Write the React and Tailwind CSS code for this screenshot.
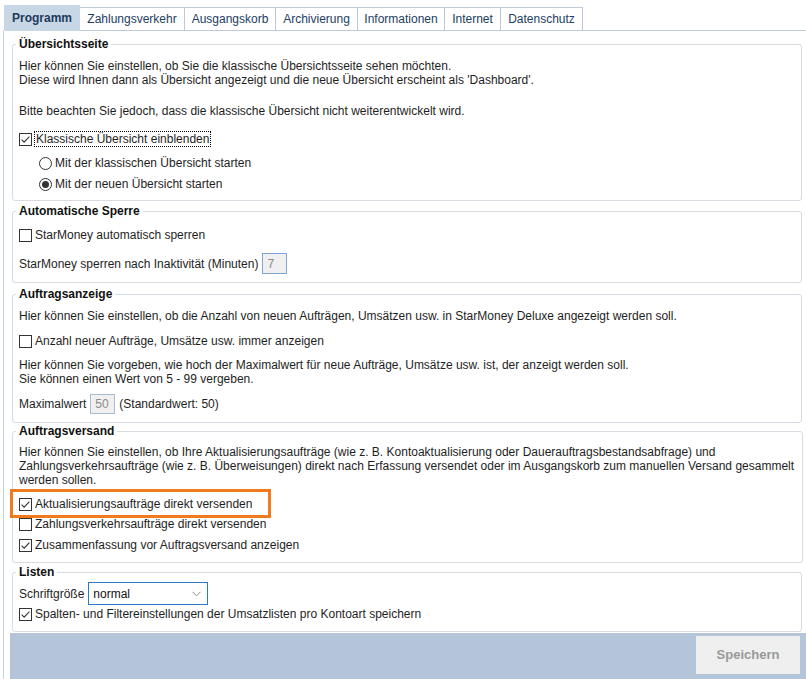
import React from "react";

const tabs = [
  { label: "Programm", w: "w-[76px]", active: true },
  { label: "Zahlungsverkehr", w: "w-[105px]" },
  { label: "Ausgangskorb", w: "w-[91px]" },
  { label: "Archivierung", w: "w-[82px]" },
  { label: "Informationen", w: "w-[87px]" },
  { label: "Internet", w: "w-[56px]" },
  { label: "Datenschutz", w: "w-[82px]" },
];

function CheckBox({ checked }) {
  return (
    <svg width="13" height="13" viewBox="0 0 13 13" className="shrink-0">
      <rect x="0.5" y="0.5" width="12" height="12" fill="#fff" stroke="#333" />
      {checked && (
        <path d="M2.6 6.6 L5.1 9.1 L10.4 3.6" fill="none" stroke="#333" strokeWidth="1.1" />
      )}
    </svg>
  );
}

function Radio({ checked }) {
  return (
    <svg width="13" height="13" viewBox="0 0 13 13" className="shrink-0">
      <circle cx="6.5" cy="6.5" r="6" fill="#fff" stroke="#333" />
      {checked && <circle cx="6.5" cy="6.5" r="3.5" fill="#333" />}
    </svg>
  );
}

function CheckRow({ checked, children, focus, className = "" }) {
  return (
    <div className={`flex items-center h-[16px] ${className}`}>
      <CheckBox checked={checked} />
      {focus ? (
        <span className="ml-[2px] px-[1px] border border-dotted border-black leading-[14px] whitespace-nowrap">
          {children}
        </span>
      ) : (
        <span className="ml-[3px] whitespace-nowrap">{children}</span>
      )}
    </div>
  );
}

function RadioRow({ checked, children, className = "" }) {
  return (
    <div className={`flex items-center h-[16px] pl-[20px] ${className}`}>
      <Radio checked={checked} />
      <span className="ml-[3px] whitespace-nowrap">{children}</span>
    </div>
  );
}

function Group({ title, className = "", children }) {
  return (
    <fieldset className={`border border-[#d6dce2] rounded-[3px] pl-[6px] pr-2 ${className}`}>
      <legend className="-ml-[3px] px-[3px] font-bold leading-[14px] text-[#111]">{title}</legend>
      {children}
    </fieldset>
  );
}

export default function App() {
  return (
    <div className="w-[806px] h-[679px] overflow-hidden bg-white font-['Liberation_Sans',Arial,sans-serif] text-[12px] leading-[14px] text-[#1e1e1e]">
      {/* tab strip */}
      <div className="flex items-end h-[31px] pl-[4px]">
        {tabs.map((t) =>
          t.active ? (
            <div
              key={t.label}
              className={`${t.w} h-[26px] bg-[#c8d7e6] flex items-center justify-center font-bold text-[#1b3a5c]`}
            >
              {t.label}
            </div>
          ) : (
            <div
              key={t.label}
              className={`${t.w} h-[24px] border-t border-r border-b border-[#bccad8] flex items-center justify-center text-[#22405f] pb-[1px]`}
            >
              {t.label}
            </div>
          )
        )}
        <div className="flex-1 border-b border-[#bccad8]" />
      </div>

      {/* panel */}
      <div className="ml-[3px] border-l border-[#c2cfdc] h-[648px] flex flex-col">
        <div className="pl-[8px] pr-[4px]">
          <Group title="Übersichtsseite" className="mt-[6px] pt-[8px] pb-[8px]">
            <p className="whitespace-nowrap">
              Hier können Sie einstellen, ob Sie die klassische Übersichtsseite sehen möchten.
              <br />
              Diese wird Ihnen dann als Übersicht angezeigt und die neue Übersicht erscheint als 'Dashboard'.
            </p>
            <p className="mt-[17px] whitespace-nowrap">
              Bitte beachten Sie jedoch, dass die klassische Übersicht nicht weiterentwickelt wird.
            </p>
            <CheckRow checked focus className="mt-[13px]">
              Klassische Übersicht einblenden
            </CheckRow>
            <RadioRow className="mt-[8px]">Mit der klassischen Übersicht starten</RadioRow>
            <RadioRow checked className="mt-[5px]">
              Mit der neuen Übersicht starten
            </RadioRow>
          </Group>

          <Group title="Automatische Sperre" className="mt-[3px] pt-[9px] pb-[8px]">
            <CheckRow>StarMoney automatisch sperren</CheckRow>
            <div className="mt-[10px] flex items-center h-[21px]">
              <span className="whitespace-nowrap">StarMoney sperren nach Inaktivität (Minuten)</span>
              <div className="ml-[4px] w-[25px] h-[21px] border border-[#7ba6d3] bg-[#f0f0f0] text-[#8a8a8a] flex items-center pl-[4px]">
                7
              </div>
            </div>
          </Group>

          <Group title="Auftragsanzeige" className="mt-[4px] pt-[8px] pb-[8px]">
            <p className="whitespace-nowrap">
              Hier können Sie einstellen, ob die Anzahl von neuen Aufträgen, Umsätzen usw. in StarMoney Deluxe angezeigt werden soll.
            </p>
            <CheckRow className="mt-[10px]">Anzahl neuer Aufträge, Umsätze usw. immer anzeigen</CheckRow>
            <p className="mt-[9px] whitespace-nowrap">
              Hier können Sie vorgeben, wie hoch der Maximalwert für neue Aufträge, Umsätze usw. ist, der anzeigt werden soll.
              <br />
              Sie können einen Wert von 5 - 99 vergeben.
            </p>
            <div className="mt-[8px] flex items-center h-[20px]">
              <span>Maximalwert</span>
              <div className="ml-[4px] w-[25px] h-[20px] border border-[#a9bccf] bg-[#f0f0f0] text-[#8a8a8a] flex items-center pl-[4px]">
                50
              </div>
              <span className="ml-[4px]">(Standardwert: 50)</span>
            </div>
          </Group>

          <Group title="Auftragsversand" className="mt-[1px] pt-[7px] pb-[9px]">
            <p className="whitespace-nowrap">
              Hier können Sie einstellen, ob Ihre Aktualisierungsaufträge (wie z. B. Kontoaktualisierung oder Dauerauftragsbestandsabfrage) und
              <br />
              Zahlungsverkehrsaufträge (wie z. B. Überweisungen) direkt nach Erfassung versendet oder im Ausgangskorb zum manuellen Versand gesammelt
              <br />
              werden sollen.
            </p>
            <div className="relative mt-[9px]">
              <CheckRow checked>Aktualisierungsaufträge direkt versenden</CheckRow>
              <span className="absolute -left-[9px] -top-[7px] w-[261px] h-[29px] border-[3px] border-[#f07a1c] pointer-events-none" />
            </div>
            <CheckRow className="mt-[4px]">Zahlungsverkehrsaufträge direkt versenden</CheckRow>
            <CheckRow checked className="mt-[5px]">
              Zusammenfassung vor Auftragsversand anzeigen
            </CheckRow>
          </Group>

          <Group title="Listen" className="mt-[2px] pt-[3px] pb-[9px]">
            <div className="flex items-center h-[23px]">
              <span>Schriftgröße</span>
              <div className="ml-[4px] w-[120px] h-[23px] border border-[#2a78cc] bg-white flex items-center justify-between pl-[4px] pr-[6px] text-[#111]">
                <span>normal</span>
                <svg width="9" height="6" viewBox="0 0 9 6">
                  <path d="M0.5 0.8 L4.5 4.8 L8.5 0.8" fill="none" stroke="#8a8a8a" strokeWidth="1" />
                </svg>
              </div>
            </div>
            <CheckRow checked className="mt-[1px]">
              Spalten- und Filtereinstellungen der Umsatzlisten pro Kontoart speichern
            </CheckRow>
          </Group>
        </div>

        <div className="mt-[1px] ml-[6px] flex-1 bg-[#b5c5d9] flex justify-end items-start pt-[3px] pr-[6px]">
          <button className="w-[104px] h-[38px] bg-[#efefef] text-[#999] font-bold text-[13px]">
            Speichern
          </button>
        </div>
      </div>
    </div>
  );
}
